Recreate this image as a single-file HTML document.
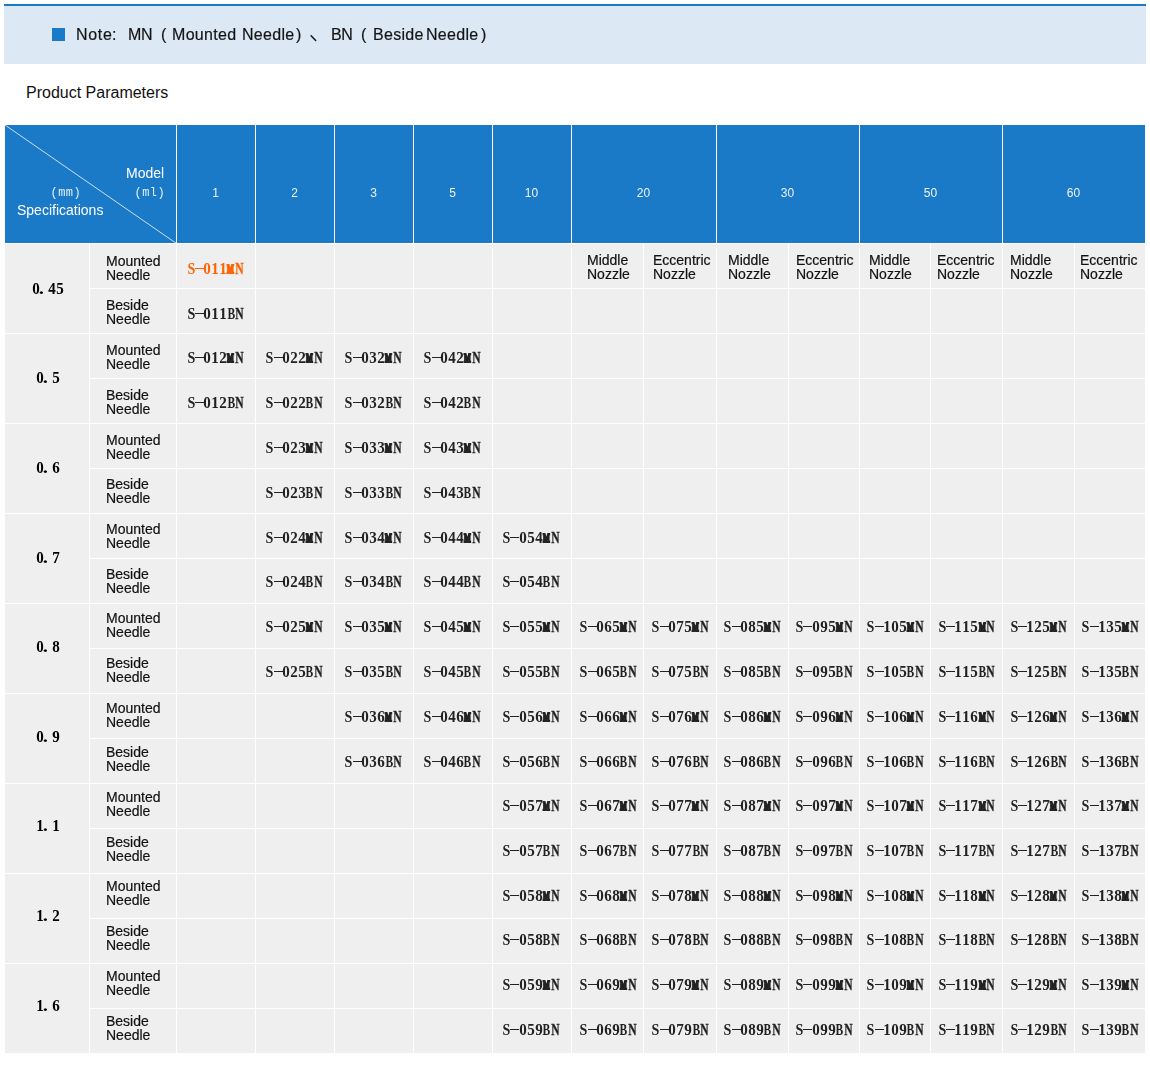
<!DOCTYPE html><html><head><meta charset="utf-8"><title>Product Parameters</title>
<style>
html,body{margin:0;padding:0;background:#fff;}
body{width:1150px;height:1090px;position:relative;overflow:hidden;font-family:"Liberation Sans",sans-serif;color:#1a1a1a;}
.a{position:absolute;}
.v{position:absolute;width:1px;background:#fff;}
.h{position:absolute;height:1px;background:#fff;}
.lab{position:absolute;font:14px/14px "Liberation Sans",sans-serif;color:#111;white-space:nowrap;-webkit-text-stroke:0.2px #111;}
.hn{position:absolute;font:12px/12px "Liberation Sans",sans-serif;color:rgba(255,255,255,.92);text-align:center;width:40px;}
.ht{position:absolute;font:14px/14px "Liberation Sans",sans-serif;color:#fff;white-space:nowrap;}
.c{position:absolute;width:56px;height:16px;white-space:nowrap;font:bold 16px/16px "Liberation Serif",serif;color:#222;}
.c i{font-style:normal;display:inline-block;width:8px;text-align:center;vertical-align:top;}
.c i b{display:inline-block;font-weight:bold;transform-origin:50% 50%;}
.o{color:#ff6200;}
.sp{position:absolute;width:84px;text-align:center;font:bold 16px/16px "Liberation Serif",serif;color:#000;white-space:nowrap;}

.nt{font:16px/20px "Liberation Sans",sans-serif;color:#151515;white-space:nowrap;letter-spacing:0.3px;-webkit-text-stroke:0.2px #151515;}
.hm{font:12px/14px "Liberation Mono",monospace;letter-spacing:0.45px;color:rgba(255,255,255,.88);}
.c i b.s{transform:scaleX(.88);}
.c i b.g{transform:scaleX(.94);}
.c i b{margin:0 -5px;}
.c i b.b{transform:translateX(0px) scaleX(.72);}
.c i b.n{transform:translateX(0.6px) scaleX(.72);-webkit-text-stroke:0.35px currentColor;}
.c i b.m{transform:translateX(-0.1px) scale(.45,.79);-webkit-text-stroke:2.6px currentColor;}
.c i u{display:block;width:9px;height:1px;background:currentColor;margin:7px 0 0 -0.2px;text-decoration:none;}
.c i b.p{transform:translateX(-2.6px) scaleX(1.3);}
</style></head><body>
<div class="a" style="left:4px;top:4px;width:1142px;height:60px;background:#dce9f5;"></div>
<div class="a" style="left:4px;top:4px;width:1142px;height:2px;background:#1b7ac8;"></div>
<div class="a" style="left:52px;top:28px;width:13px;height:13px;background:#1b7ac8;"></div>
<!--NOTE_TEXT-->
<div class="a" id="pp" style="left:26px;top:84px;font:16px/18px 'Liberation Sans',sans-serif;color:#111;white-space:nowrap;">Product Parameters</div>
<div class="a" style="left:5px;top:125px;width:1140px;height:118px;background:#1b7ac8;"></div>
<div class="a" style="left:5px;top:243px;width:1140px;height:810px;background:#efefef;"></div>
<svg class="a" style="left:5px;top:125px;" width="172" height="119" viewBox="0 0 172 119"><line x1="0" y1="0" x2="171.5" y2="118.5" stroke="#fff" stroke-width="0.9" stroke-opacity="0.85"/></svg>
<div class="v" style="left:176px;top:125px;height:928px;"></div>
<div class="v" style="left:255px;top:125px;height:928px;"></div>
<div class="v" style="left:334px;top:125px;height:928px;"></div>
<div class="v" style="left:413px;top:125px;height:928px;"></div>
<div class="v" style="left:492px;top:125px;height:928px;"></div>
<div class="v" style="left:571px;top:125px;height:928px;"></div>
<div class="v" style="left:643px;top:243px;height:810px;"></div>
<div class="v" style="left:716px;top:125px;height:928px;"></div>
<div class="v" style="left:788px;top:243px;height:810px;"></div>
<div class="v" style="left:859px;top:125px;height:928px;"></div>
<div class="v" style="left:930px;top:243px;height:810px;"></div>
<div class="v" style="left:1002px;top:125px;height:928px;"></div>
<div class="v" style="left:1074px;top:243px;height:810px;"></div>
<div class="v" style="left:89px;top:243px;height:810px;"></div>
<div class="h" style="left:5px;top:243px;width:1140px;"></div>
<div class="h" style="left:90px;top:288px;width:1055px;"></div>
<div class="h" style="left:5px;top:333px;width:1140px;"></div>
<div class="h" style="left:90px;top:378px;width:1055px;"></div>
<div class="h" style="left:5px;top:423px;width:1140px;"></div>
<div class="h" style="left:90px;top:468px;width:1055px;"></div>
<div class="h" style="left:5px;top:513px;width:1140px;"></div>
<div class="h" style="left:90px;top:558px;width:1055px;"></div>
<div class="h" style="left:5px;top:603px;width:1140px;"></div>
<div class="h" style="left:90px;top:648px;width:1055px;"></div>
<div class="h" style="left:5px;top:693px;width:1140px;"></div>
<div class="h" style="left:90px;top:738px;width:1055px;"></div>
<div class="h" style="left:5px;top:783px;width:1140px;"></div>
<div class="h" style="left:90px;top:828px;width:1055px;"></div>
<div class="h" style="left:5px;top:873px;width:1140px;"></div>
<div class="h" style="left:90px;top:918px;width:1055px;"></div>
<div class="h" style="left:5px;top:963px;width:1140px;"></div>
<div class="h" style="left:90px;top:1008px;width:1055px;"></div>
<div id="L" style="position:absolute;left:0;top:0;width:1150px;height:1090px;will-change:transform;">
<div class="a nt" style="left:76px;top:25px;letter-spacing:0.7px;">Note</div>
<div class="a nt" style="left:112px;top:25px;">:</div>
<div class="a nt" style="left:128px;top:25px;letter-spacing:-0.3px;">MN</div>
<div class="a nt" style="left:161px;top:25px;">(</div>
<div class="a nt" style="left:172px;top:25px;">Mounted</div>
<div class="a nt" style="left:242px;top:25px;">Needle</div>
<div class="a nt" style="left:296px;top:25px;">)</div>
<div class="a nt" style="left:331px;top:25px;letter-spacing:-0.3px;">BN</div>
<div class="a nt" style="left:361px;top:25px;">(</div>
<div class="a nt" style="left:373px;top:25px;">Beside</div>
<div class="a nt" style="left:426px;top:25px;">Needle</div>
<div class="a nt" style="left:481px;top:25px;">)</div>
<svg class="a" style="left:308px;top:32px;" width="12" height="12" viewBox="0 0 12 12"><line x1="3.1" y1="3.7" x2="7.7" y2="8.5" stroke="#151515" stroke-width="1.5" stroke-linecap="round"/></svg>
<div class="ht" id="hmodel" style="left:126px;top:166px;">Model</div>
<div class="ht hm" id="hml" style="left:134.5px;top:185.7px;">(ml)</div>
<div class="ht hm" id="hmm" style="left:50.5px;top:185.7px;">(mm)</div>
<div class="ht" id="hspec" style="left:17px;top:203px;">Specifications</div>
<div class="hn" style="left:195.5px;top:187px;">1</div>
<div class="hn" style="left:274.5px;top:187px;">2</div>
<div class="hn" style="left:353.5px;top:187px;">3</div>
<div class="hn" style="left:432.5px;top:187px;">5</div>
<div class="hn" style="left:511.5px;top:187px;">10</div>
<div class="hn" style="left:623.5px;top:187px;">20</div>
<div class="hn" style="left:767.5px;top:187px;">30</div>
<div class="hn" style="left:910.5px;top:187px;">50</div>
<div class="hn" style="left:1053.5px;top:187px;">60</div>
<div class="lab" style="left:587px;top:253px;">Middle<br>Nozzle</div>
<div class="lab" style="left:653px;top:253px;">Eccentric<br>Nozzle</div>
<div class="lab" style="left:728px;top:253px;">Middle<br>Nozzle</div>
<div class="lab" style="left:796px;top:253px;">Eccentric<br>Nozzle</div>
<div class="lab" style="left:869px;top:253px;">Middle<br>Nozzle</div>
<div class="lab" style="left:937px;top:253px;">Eccentric<br>Nozzle</div>
<div class="lab" style="left:1010px;top:253px;">Middle<br>Nozzle</div>
<div class="lab" style="left:1080px;top:253px;">Eccentric<br>Nozzle</div>
<div class="lab" style="left:106px;top:254.15px;">Mounted<br>Needle</div>
<div class="lab" style="left:106px;top:298.15px;">Beside<br>Needle</div>
<div class="lab" style="left:106px;top:343.47px;">Mounted<br>Needle</div>
<div class="lab" style="left:106px;top:387.60px;">Beside<br>Needle</div>
<div class="lab" style="left:106px;top:432.80px;">Mounted<br>Needle</div>
<div class="lab" style="left:106px;top:477.05px;">Beside<br>Needle</div>
<div class="lab" style="left:106px;top:522.12px;">Mounted<br>Needle</div>
<div class="lab" style="left:106px;top:566.50px;">Beside<br>Needle</div>
<div class="lab" style="left:106px;top:611.45px;">Mounted<br>Needle</div>
<div class="lab" style="left:106px;top:655.95px;">Beside<br>Needle</div>
<div class="lab" style="left:106px;top:700.77px;">Mounted<br>Needle</div>
<div class="lab" style="left:106px;top:745.40px;">Beside<br>Needle</div>
<div class="lab" style="left:106px;top:790.10px;">Mounted<br>Needle</div>
<div class="lab" style="left:106px;top:834.85px;">Beside<br>Needle</div>
<div class="lab" style="left:106px;top:879.42px;">Mounted<br>Needle</div>
<div class="lab" style="left:106px;top:924.30px;">Beside<br>Needle</div>
<div class="lab" style="left:106px;top:968.75px;">Mounted<br>Needle</div>
<div class="lab" style="left:106px;top:1013.75px;">Beside<br>Needle</div>
<div class="c sp" style="left:32.1px;top:280.70px;width:32px;"><i><b class="g">0</b></i><i><b class="p">.</b></i><i><b class="g">4</b></i><i><b class="g">5</b></i></div>
<div class="c sp" style="left:36.1px;top:370.32px;width:24px;"><i><b class="g">0</b></i><i><b class="p">.</b></i><i><b class="g">5</b></i></div>
<div class="c sp" style="left:36.1px;top:459.94px;width:24px;"><i><b class="g">0</b></i><i><b class="p">.</b></i><i><b class="g">6</b></i></div>
<div class="c sp" style="left:36.1px;top:549.56px;width:24px;"><i><b class="g">0</b></i><i><b class="p">.</b></i><i><b class="g">7</b></i></div>
<div class="c sp" style="left:36.1px;top:639.18px;width:24px;"><i><b class="g">0</b></i><i><b class="p">.</b></i><i><b class="g">8</b></i></div>
<div class="c sp" style="left:36.1px;top:728.80px;width:24px;"><i><b class="g">0</b></i><i><b class="p">.</b></i><i><b class="g">9</b></i></div>
<div class="c sp" style="left:36.1px;top:818.42px;width:24px;"><i><b class="g">1</b></i><i><b class="p">.</b></i><i><b class="g">1</b></i></div>
<div class="c sp" style="left:36.1px;top:908.04px;width:24px;"><i><b class="g">1</b></i><i><b class="p">.</b></i><i><b class="g">2</b></i></div>
<div class="c sp" style="left:36.1px;top:997.66px;width:24px;"><i><b class="g">1</b></i><i><b class="p">.</b></i><i><b class="g">6</b></i></div>
<div class="c o" style="left:187.0px;top:261.00px;"><i><b class="s">S</b></i><i><u></u></i><i><b class="g">0</b></i><i><b class="g">1</b></i><i><b class="g">1</b></i><i><b class="m">M</b></i><i><b class="n">N</b></i></div>
<div class="c" style="left:187.0px;top:306.00px;"><i><b class="s">S</b></i><i><u></u></i><i><b class="g">0</b></i><i><b class="g">1</b></i><i><b class="g">1</b></i><i><b class="b">B</b></i><i><b class="n">N</b></i></div>
<div class="c" style="left:187.0px;top:350.00px;"><i><b class="s">S</b></i><i><u></u></i><i><b class="g">0</b></i><i><b class="g">1</b></i><i><b class="g">2</b></i><i><b class="m">M</b></i><i><b class="n">N</b></i></div>
<div class="c" style="left:265.7px;top:350.00px;"><i><b class="s">S</b></i><i><u></u></i><i><b class="g">0</b></i><i><b class="g">2</b></i><i><b class="g">2</b></i><i><b class="m">M</b></i><i><b class="n">N</b></i></div>
<div class="c" style="left:344.9px;top:350.00px;"><i><b class="s">S</b></i><i><u></u></i><i><b class="g">0</b></i><i><b class="g">3</b></i><i><b class="g">2</b></i><i><b class="m">M</b></i><i><b class="n">N</b></i></div>
<div class="c" style="left:423.8px;top:350.00px;"><i><b class="s">S</b></i><i><u></u></i><i><b class="g">0</b></i><i><b class="g">4</b></i><i><b class="g">2</b></i><i><b class="m">M</b></i><i><b class="n">N</b></i></div>
<div class="c" style="left:187.0px;top:395.00px;"><i><b class="s">S</b></i><i><u></u></i><i><b class="g">0</b></i><i><b class="g">1</b></i><i><b class="g">2</b></i><i><b class="b">B</b></i><i><b class="n">N</b></i></div>
<div class="c" style="left:265.7px;top:395.00px;"><i><b class="s">S</b></i><i><u></u></i><i><b class="g">0</b></i><i><b class="g">2</b></i><i><b class="g">2</b></i><i><b class="b">B</b></i><i><b class="n">N</b></i></div>
<div class="c" style="left:344.9px;top:395.00px;"><i><b class="s">S</b></i><i><u></u></i><i><b class="g">0</b></i><i><b class="g">3</b></i><i><b class="g">2</b></i><i><b class="b">B</b></i><i><b class="n">N</b></i></div>
<div class="c" style="left:423.8px;top:395.00px;"><i><b class="s">S</b></i><i><u></u></i><i><b class="g">0</b></i><i><b class="g">4</b></i><i><b class="g">2</b></i><i><b class="b">B</b></i><i><b class="n">N</b></i></div>
<div class="c" style="left:265.7px;top:440.00px;"><i><b class="s">S</b></i><i><u></u></i><i><b class="g">0</b></i><i><b class="g">2</b></i><i><b class="g">3</b></i><i><b class="m">M</b></i><i><b class="n">N</b></i></div>
<div class="c" style="left:344.9px;top:440.00px;"><i><b class="s">S</b></i><i><u></u></i><i><b class="g">0</b></i><i><b class="g">3</b></i><i><b class="g">3</b></i><i><b class="m">M</b></i><i><b class="n">N</b></i></div>
<div class="c" style="left:423.8px;top:440.00px;"><i><b class="s">S</b></i><i><u></u></i><i><b class="g">0</b></i><i><b class="g">4</b></i><i><b class="g">3</b></i><i><b class="m">M</b></i><i><b class="n">N</b></i></div>
<div class="c" style="left:265.7px;top:485.00px;"><i><b class="s">S</b></i><i><u></u></i><i><b class="g">0</b></i><i><b class="g">2</b></i><i><b class="g">3</b></i><i><b class="b">B</b></i><i><b class="n">N</b></i></div>
<div class="c" style="left:344.9px;top:485.00px;"><i><b class="s">S</b></i><i><u></u></i><i><b class="g">0</b></i><i><b class="g">3</b></i><i><b class="g">3</b></i><i><b class="b">B</b></i><i><b class="n">N</b></i></div>
<div class="c" style="left:423.8px;top:485.00px;"><i><b class="s">S</b></i><i><u></u></i><i><b class="g">0</b></i><i><b class="g">4</b></i><i><b class="g">3</b></i><i><b class="b">B</b></i><i><b class="n">N</b></i></div>
<div class="c" style="left:265.7px;top:530.00px;"><i><b class="s">S</b></i><i><u></u></i><i><b class="g">0</b></i><i><b class="g">2</b></i><i><b class="g">4</b></i><i><b class="m">M</b></i><i><b class="n">N</b></i></div>
<div class="c" style="left:344.9px;top:530.00px;"><i><b class="s">S</b></i><i><u></u></i><i><b class="g">0</b></i><i><b class="g">3</b></i><i><b class="g">4</b></i><i><b class="m">M</b></i><i><b class="n">N</b></i></div>
<div class="c" style="left:423.8px;top:530.00px;"><i><b class="s">S</b></i><i><u></u></i><i><b class="g">0</b></i><i><b class="g">4</b></i><i><b class="g">4</b></i><i><b class="m">M</b></i><i><b class="n">N</b></i></div>
<div class="c" style="left:502.6px;top:530.00px;"><i><b class="s">S</b></i><i><u></u></i><i><b class="g">0</b></i><i><b class="g">5</b></i><i><b class="g">4</b></i><i><b class="m">M</b></i><i><b class="n">N</b></i></div>
<div class="c" style="left:265.7px;top:574.00px;"><i><b class="s">S</b></i><i><u></u></i><i><b class="g">0</b></i><i><b class="g">2</b></i><i><b class="g">4</b></i><i><b class="b">B</b></i><i><b class="n">N</b></i></div>
<div class="c" style="left:344.9px;top:574.00px;"><i><b class="s">S</b></i><i><u></u></i><i><b class="g">0</b></i><i><b class="g">3</b></i><i><b class="g">4</b></i><i><b class="b">B</b></i><i><b class="n">N</b></i></div>
<div class="c" style="left:423.8px;top:574.00px;"><i><b class="s">S</b></i><i><u></u></i><i><b class="g">0</b></i><i><b class="g">4</b></i><i><b class="g">4</b></i><i><b class="b">B</b></i><i><b class="n">N</b></i></div>
<div class="c" style="left:502.6px;top:574.00px;"><i><b class="s">S</b></i><i><u></u></i><i><b class="g">0</b></i><i><b class="g">5</b></i><i><b class="g">4</b></i><i><b class="b">B</b></i><i><b class="n">N</b></i></div>
<div class="c" style="left:265.7px;top:619.00px;"><i><b class="s">S</b></i><i><u></u></i><i><b class="g">0</b></i><i><b class="g">2</b></i><i><b class="g">5</b></i><i><b class="m">M</b></i><i><b class="n">N</b></i></div>
<div class="c" style="left:344.9px;top:619.00px;"><i><b class="s">S</b></i><i><u></u></i><i><b class="g">0</b></i><i><b class="g">3</b></i><i><b class="g">5</b></i><i><b class="m">M</b></i><i><b class="n">N</b></i></div>
<div class="c" style="left:423.8px;top:619.00px;"><i><b class="s">S</b></i><i><u></u></i><i><b class="g">0</b></i><i><b class="g">4</b></i><i><b class="g">5</b></i><i><b class="m">M</b></i><i><b class="n">N</b></i></div>
<div class="c" style="left:502.6px;top:619.00px;"><i><b class="s">S</b></i><i><u></u></i><i><b class="g">0</b></i><i><b class="g">5</b></i><i><b class="g">5</b></i><i><b class="m">M</b></i><i><b class="n">N</b></i></div>
<div class="c" style="left:579.7px;top:619.00px;"><i><b class="s">S</b></i><i><u></u></i><i><b class="g">0</b></i><i><b class="g">6</b></i><i><b class="g">5</b></i><i><b class="m">M</b></i><i><b class="n">N</b></i></div>
<div class="c" style="left:651.9px;top:619.00px;"><i><b class="s">S</b></i><i><u></u></i><i><b class="g">0</b></i><i><b class="g">7</b></i><i><b class="g">5</b></i><i><b class="m">M</b></i><i><b class="n">N</b></i></div>
<div class="c" style="left:723.7px;top:619.00px;"><i><b class="s">S</b></i><i><u></u></i><i><b class="g">0</b></i><i><b class="g">8</b></i><i><b class="g">5</b></i><i><b class="m">M</b></i><i><b class="n">N</b></i></div>
<div class="c" style="left:795.6px;top:619.00px;"><i><b class="s">S</b></i><i><u></u></i><i><b class="g">0</b></i><i><b class="g">9</b></i><i><b class="g">5</b></i><i><b class="m">M</b></i><i><b class="n">N</b></i></div>
<div class="c" style="left:866.7px;top:619.00px;"><i><b class="s">S</b></i><i><u></u></i><i><b class="g">1</b></i><i><b class="g">0</b></i><i><b class="g">5</b></i><i><b class="m">M</b></i><i><b class="n">N</b></i></div>
<div class="c" style="left:938.1px;top:619.00px;"><i><b class="s">S</b></i><i><u></u></i><i><b class="g">1</b></i><i><b class="g">1</b></i><i><b class="g">5</b></i><i><b class="m">M</b></i><i><b class="n">N</b></i></div>
<div class="c" style="left:1010.0px;top:619.00px;"><i><b class="s">S</b></i><i><u></u></i><i><b class="g">1</b></i><i><b class="g">2</b></i><i><b class="g">5</b></i><i><b class="m">M</b></i><i><b class="n">N</b></i></div>
<div class="c" style="left:1081.7px;top:619.00px;"><i><b class="s">S</b></i><i><u></u></i><i><b class="g">1</b></i><i><b class="g">3</b></i><i><b class="g">5</b></i><i><b class="m">M</b></i><i><b class="n">N</b></i></div>
<div class="c" style="left:265.7px;top:664.00px;"><i><b class="s">S</b></i><i><u></u></i><i><b class="g">0</b></i><i><b class="g">2</b></i><i><b class="g">5</b></i><i><b class="b">B</b></i><i><b class="n">N</b></i></div>
<div class="c" style="left:344.9px;top:664.00px;"><i><b class="s">S</b></i><i><u></u></i><i><b class="g">0</b></i><i><b class="g">3</b></i><i><b class="g">5</b></i><i><b class="b">B</b></i><i><b class="n">N</b></i></div>
<div class="c" style="left:423.8px;top:664.00px;"><i><b class="s">S</b></i><i><u></u></i><i><b class="g">0</b></i><i><b class="g">4</b></i><i><b class="g">5</b></i><i><b class="b">B</b></i><i><b class="n">N</b></i></div>
<div class="c" style="left:502.6px;top:664.00px;"><i><b class="s">S</b></i><i><u></u></i><i><b class="g">0</b></i><i><b class="g">5</b></i><i><b class="g">5</b></i><i><b class="b">B</b></i><i><b class="n">N</b></i></div>
<div class="c" style="left:579.7px;top:664.00px;"><i><b class="s">S</b></i><i><u></u></i><i><b class="g">0</b></i><i><b class="g">6</b></i><i><b class="g">5</b></i><i><b class="b">B</b></i><i><b class="n">N</b></i></div>
<div class="c" style="left:651.9px;top:664.00px;"><i><b class="s">S</b></i><i><u></u></i><i><b class="g">0</b></i><i><b class="g">7</b></i><i><b class="g">5</b></i><i><b class="b">B</b></i><i><b class="n">N</b></i></div>
<div class="c" style="left:723.7px;top:664.00px;"><i><b class="s">S</b></i><i><u></u></i><i><b class="g">0</b></i><i><b class="g">8</b></i><i><b class="g">5</b></i><i><b class="b">B</b></i><i><b class="n">N</b></i></div>
<div class="c" style="left:795.6px;top:664.00px;"><i><b class="s">S</b></i><i><u></u></i><i><b class="g">0</b></i><i><b class="g">9</b></i><i><b class="g">5</b></i><i><b class="b">B</b></i><i><b class="n">N</b></i></div>
<div class="c" style="left:866.7px;top:664.00px;"><i><b class="s">S</b></i><i><u></u></i><i><b class="g">1</b></i><i><b class="g">0</b></i><i><b class="g">5</b></i><i><b class="b">B</b></i><i><b class="n">N</b></i></div>
<div class="c" style="left:938.1px;top:664.00px;"><i><b class="s">S</b></i><i><u></u></i><i><b class="g">1</b></i><i><b class="g">1</b></i><i><b class="g">5</b></i><i><b class="b">B</b></i><i><b class="n">N</b></i></div>
<div class="c" style="left:1010.0px;top:664.00px;"><i><b class="s">S</b></i><i><u></u></i><i><b class="g">1</b></i><i><b class="g">2</b></i><i><b class="g">5</b></i><i><b class="b">B</b></i><i><b class="n">N</b></i></div>
<div class="c" style="left:1081.7px;top:664.00px;"><i><b class="s">S</b></i><i><u></u></i><i><b class="g">1</b></i><i><b class="g">3</b></i><i><b class="g">5</b></i><i><b class="b">B</b></i><i><b class="n">N</b></i></div>
<div class="c" style="left:344.9px;top:709.00px;"><i><b class="s">S</b></i><i><u></u></i><i><b class="g">0</b></i><i><b class="g">3</b></i><i><b class="g">6</b></i><i><b class="m">M</b></i><i><b class="n">N</b></i></div>
<div class="c" style="left:423.8px;top:709.00px;"><i><b class="s">S</b></i><i><u></u></i><i><b class="g">0</b></i><i><b class="g">4</b></i><i><b class="g">6</b></i><i><b class="m">M</b></i><i><b class="n">N</b></i></div>
<div class="c" style="left:502.6px;top:709.00px;"><i><b class="s">S</b></i><i><u></u></i><i><b class="g">0</b></i><i><b class="g">5</b></i><i><b class="g">6</b></i><i><b class="m">M</b></i><i><b class="n">N</b></i></div>
<div class="c" style="left:579.7px;top:709.00px;"><i><b class="s">S</b></i><i><u></u></i><i><b class="g">0</b></i><i><b class="g">6</b></i><i><b class="g">6</b></i><i><b class="m">M</b></i><i><b class="n">N</b></i></div>
<div class="c" style="left:651.9px;top:709.00px;"><i><b class="s">S</b></i><i><u></u></i><i><b class="g">0</b></i><i><b class="g">7</b></i><i><b class="g">6</b></i><i><b class="m">M</b></i><i><b class="n">N</b></i></div>
<div class="c" style="left:723.7px;top:709.00px;"><i><b class="s">S</b></i><i><u></u></i><i><b class="g">0</b></i><i><b class="g">8</b></i><i><b class="g">6</b></i><i><b class="m">M</b></i><i><b class="n">N</b></i></div>
<div class="c" style="left:795.6px;top:709.00px;"><i><b class="s">S</b></i><i><u></u></i><i><b class="g">0</b></i><i><b class="g">9</b></i><i><b class="g">6</b></i><i><b class="m">M</b></i><i><b class="n">N</b></i></div>
<div class="c" style="left:866.7px;top:709.00px;"><i><b class="s">S</b></i><i><u></u></i><i><b class="g">1</b></i><i><b class="g">0</b></i><i><b class="g">6</b></i><i><b class="m">M</b></i><i><b class="n">N</b></i></div>
<div class="c" style="left:938.1px;top:709.00px;"><i><b class="s">S</b></i><i><u></u></i><i><b class="g">1</b></i><i><b class="g">1</b></i><i><b class="g">6</b></i><i><b class="m">M</b></i><i><b class="n">N</b></i></div>
<div class="c" style="left:1010.0px;top:709.00px;"><i><b class="s">S</b></i><i><u></u></i><i><b class="g">1</b></i><i><b class="g">2</b></i><i><b class="g">6</b></i><i><b class="m">M</b></i><i><b class="n">N</b></i></div>
<div class="c" style="left:1081.7px;top:709.00px;"><i><b class="s">S</b></i><i><u></u></i><i><b class="g">1</b></i><i><b class="g">3</b></i><i><b class="g">6</b></i><i><b class="m">M</b></i><i><b class="n">N</b></i></div>
<div class="c" style="left:344.9px;top:754.00px;"><i><b class="s">S</b></i><i><u></u></i><i><b class="g">0</b></i><i><b class="g">3</b></i><i><b class="g">6</b></i><i><b class="b">B</b></i><i><b class="n">N</b></i></div>
<div class="c" style="left:423.8px;top:754.00px;"><i><b class="s">S</b></i><i><u></u></i><i><b class="g">0</b></i><i><b class="g">4</b></i><i><b class="g">6</b></i><i><b class="b">B</b></i><i><b class="n">N</b></i></div>
<div class="c" style="left:502.6px;top:754.00px;"><i><b class="s">S</b></i><i><u></u></i><i><b class="g">0</b></i><i><b class="g">5</b></i><i><b class="g">6</b></i><i><b class="b">B</b></i><i><b class="n">N</b></i></div>
<div class="c" style="left:579.7px;top:754.00px;"><i><b class="s">S</b></i><i><u></u></i><i><b class="g">0</b></i><i><b class="g">6</b></i><i><b class="g">6</b></i><i><b class="b">B</b></i><i><b class="n">N</b></i></div>
<div class="c" style="left:651.9px;top:754.00px;"><i><b class="s">S</b></i><i><u></u></i><i><b class="g">0</b></i><i><b class="g">7</b></i><i><b class="g">6</b></i><i><b class="b">B</b></i><i><b class="n">N</b></i></div>
<div class="c" style="left:723.7px;top:754.00px;"><i><b class="s">S</b></i><i><u></u></i><i><b class="g">0</b></i><i><b class="g">8</b></i><i><b class="g">6</b></i><i><b class="b">B</b></i><i><b class="n">N</b></i></div>
<div class="c" style="left:795.6px;top:754.00px;"><i><b class="s">S</b></i><i><u></u></i><i><b class="g">0</b></i><i><b class="g">9</b></i><i><b class="g">6</b></i><i><b class="b">B</b></i><i><b class="n">N</b></i></div>
<div class="c" style="left:866.7px;top:754.00px;"><i><b class="s">S</b></i><i><u></u></i><i><b class="g">1</b></i><i><b class="g">0</b></i><i><b class="g">6</b></i><i><b class="b">B</b></i><i><b class="n">N</b></i></div>
<div class="c" style="left:938.1px;top:754.00px;"><i><b class="s">S</b></i><i><u></u></i><i><b class="g">1</b></i><i><b class="g">1</b></i><i><b class="g">6</b></i><i><b class="b">B</b></i><i><b class="n">N</b></i></div>
<div class="c" style="left:1010.0px;top:754.00px;"><i><b class="s">S</b></i><i><u></u></i><i><b class="g">1</b></i><i><b class="g">2</b></i><i><b class="g">6</b></i><i><b class="b">B</b></i><i><b class="n">N</b></i></div>
<div class="c" style="left:1081.7px;top:754.00px;"><i><b class="s">S</b></i><i><u></u></i><i><b class="g">1</b></i><i><b class="g">3</b></i><i><b class="g">6</b></i><i><b class="b">B</b></i><i><b class="n">N</b></i></div>
<div class="c" style="left:502.6px;top:798.00px;"><i><b class="s">S</b></i><i><u></u></i><i><b class="g">0</b></i><i><b class="g">5</b></i><i><b class="g">7</b></i><i><b class="m">M</b></i><i><b class="n">N</b></i></div>
<div class="c" style="left:579.7px;top:798.00px;"><i><b class="s">S</b></i><i><u></u></i><i><b class="g">0</b></i><i><b class="g">6</b></i><i><b class="g">7</b></i><i><b class="m">M</b></i><i><b class="n">N</b></i></div>
<div class="c" style="left:651.9px;top:798.00px;"><i><b class="s">S</b></i><i><u></u></i><i><b class="g">0</b></i><i><b class="g">7</b></i><i><b class="g">7</b></i><i><b class="m">M</b></i><i><b class="n">N</b></i></div>
<div class="c" style="left:723.7px;top:798.00px;"><i><b class="s">S</b></i><i><u></u></i><i><b class="g">0</b></i><i><b class="g">8</b></i><i><b class="g">7</b></i><i><b class="m">M</b></i><i><b class="n">N</b></i></div>
<div class="c" style="left:795.6px;top:798.00px;"><i><b class="s">S</b></i><i><u></u></i><i><b class="g">0</b></i><i><b class="g">9</b></i><i><b class="g">7</b></i><i><b class="m">M</b></i><i><b class="n">N</b></i></div>
<div class="c" style="left:866.7px;top:798.00px;"><i><b class="s">S</b></i><i><u></u></i><i><b class="g">1</b></i><i><b class="g">0</b></i><i><b class="g">7</b></i><i><b class="m">M</b></i><i><b class="n">N</b></i></div>
<div class="c" style="left:938.1px;top:798.00px;"><i><b class="s">S</b></i><i><u></u></i><i><b class="g">1</b></i><i><b class="g">1</b></i><i><b class="g">7</b></i><i><b class="m">M</b></i><i><b class="n">N</b></i></div>
<div class="c" style="left:1010.0px;top:798.00px;"><i><b class="s">S</b></i><i><u></u></i><i><b class="g">1</b></i><i><b class="g">2</b></i><i><b class="g">7</b></i><i><b class="m">M</b></i><i><b class="n">N</b></i></div>
<div class="c" style="left:1081.7px;top:798.00px;"><i><b class="s">S</b></i><i><u></u></i><i><b class="g">1</b></i><i><b class="g">3</b></i><i><b class="g">7</b></i><i><b class="m">M</b></i><i><b class="n">N</b></i></div>
<div class="c" style="left:502.6px;top:843.00px;"><i><b class="s">S</b></i><i><u></u></i><i><b class="g">0</b></i><i><b class="g">5</b></i><i><b class="g">7</b></i><i><b class="b">B</b></i><i><b class="n">N</b></i></div>
<div class="c" style="left:579.7px;top:843.00px;"><i><b class="s">S</b></i><i><u></u></i><i><b class="g">0</b></i><i><b class="g">6</b></i><i><b class="g">7</b></i><i><b class="b">B</b></i><i><b class="n">N</b></i></div>
<div class="c" style="left:651.9px;top:843.00px;"><i><b class="s">S</b></i><i><u></u></i><i><b class="g">0</b></i><i><b class="g">7</b></i><i><b class="g">7</b></i><i><b class="b">B</b></i><i><b class="n">N</b></i></div>
<div class="c" style="left:723.7px;top:843.00px;"><i><b class="s">S</b></i><i><u></u></i><i><b class="g">0</b></i><i><b class="g">8</b></i><i><b class="g">7</b></i><i><b class="b">B</b></i><i><b class="n">N</b></i></div>
<div class="c" style="left:795.6px;top:843.00px;"><i><b class="s">S</b></i><i><u></u></i><i><b class="g">0</b></i><i><b class="g">9</b></i><i><b class="g">7</b></i><i><b class="b">B</b></i><i><b class="n">N</b></i></div>
<div class="c" style="left:866.7px;top:843.00px;"><i><b class="s">S</b></i><i><u></u></i><i><b class="g">1</b></i><i><b class="g">0</b></i><i><b class="g">7</b></i><i><b class="b">B</b></i><i><b class="n">N</b></i></div>
<div class="c" style="left:938.1px;top:843.00px;"><i><b class="s">S</b></i><i><u></u></i><i><b class="g">1</b></i><i><b class="g">1</b></i><i><b class="g">7</b></i><i><b class="b">B</b></i><i><b class="n">N</b></i></div>
<div class="c" style="left:1010.0px;top:843.00px;"><i><b class="s">S</b></i><i><u></u></i><i><b class="g">1</b></i><i><b class="g">2</b></i><i><b class="g">7</b></i><i><b class="b">B</b></i><i><b class="n">N</b></i></div>
<div class="c" style="left:1081.7px;top:843.00px;"><i><b class="s">S</b></i><i><u></u></i><i><b class="g">1</b></i><i><b class="g">3</b></i><i><b class="g">7</b></i><i><b class="b">B</b></i><i><b class="n">N</b></i></div>
<div class="c" style="left:502.6px;top:888.00px;"><i><b class="s">S</b></i><i><u></u></i><i><b class="g">0</b></i><i><b class="g">5</b></i><i><b class="g">8</b></i><i><b class="m">M</b></i><i><b class="n">N</b></i></div>
<div class="c" style="left:579.7px;top:888.00px;"><i><b class="s">S</b></i><i><u></u></i><i><b class="g">0</b></i><i><b class="g">6</b></i><i><b class="g">8</b></i><i><b class="m">M</b></i><i><b class="n">N</b></i></div>
<div class="c" style="left:651.9px;top:888.00px;"><i><b class="s">S</b></i><i><u></u></i><i><b class="g">0</b></i><i><b class="g">7</b></i><i><b class="g">8</b></i><i><b class="m">M</b></i><i><b class="n">N</b></i></div>
<div class="c" style="left:723.7px;top:888.00px;"><i><b class="s">S</b></i><i><u></u></i><i><b class="g">0</b></i><i><b class="g">8</b></i><i><b class="g">8</b></i><i><b class="m">M</b></i><i><b class="n">N</b></i></div>
<div class="c" style="left:795.6px;top:888.00px;"><i><b class="s">S</b></i><i><u></u></i><i><b class="g">0</b></i><i><b class="g">9</b></i><i><b class="g">8</b></i><i><b class="m">M</b></i><i><b class="n">N</b></i></div>
<div class="c" style="left:866.7px;top:888.00px;"><i><b class="s">S</b></i><i><u></u></i><i><b class="g">1</b></i><i><b class="g">0</b></i><i><b class="g">8</b></i><i><b class="m">M</b></i><i><b class="n">N</b></i></div>
<div class="c" style="left:938.1px;top:888.00px;"><i><b class="s">S</b></i><i><u></u></i><i><b class="g">1</b></i><i><b class="g">1</b></i><i><b class="g">8</b></i><i><b class="m">M</b></i><i><b class="n">N</b></i></div>
<div class="c" style="left:1010.0px;top:888.00px;"><i><b class="s">S</b></i><i><u></u></i><i><b class="g">1</b></i><i><b class="g">2</b></i><i><b class="g">8</b></i><i><b class="m">M</b></i><i><b class="n">N</b></i></div>
<div class="c" style="left:1081.7px;top:888.00px;"><i><b class="s">S</b></i><i><u></u></i><i><b class="g">1</b></i><i><b class="g">3</b></i><i><b class="g">8</b></i><i><b class="m">M</b></i><i><b class="n">N</b></i></div>
<div class="c" style="left:502.6px;top:932.00px;"><i><b class="s">S</b></i><i><u></u></i><i><b class="g">0</b></i><i><b class="g">5</b></i><i><b class="g">8</b></i><i><b class="b">B</b></i><i><b class="n">N</b></i></div>
<div class="c" style="left:579.7px;top:932.00px;"><i><b class="s">S</b></i><i><u></u></i><i><b class="g">0</b></i><i><b class="g">6</b></i><i><b class="g">8</b></i><i><b class="b">B</b></i><i><b class="n">N</b></i></div>
<div class="c" style="left:651.9px;top:932.00px;"><i><b class="s">S</b></i><i><u></u></i><i><b class="g">0</b></i><i><b class="g">7</b></i><i><b class="g">8</b></i><i><b class="b">B</b></i><i><b class="n">N</b></i></div>
<div class="c" style="left:723.7px;top:932.00px;"><i><b class="s">S</b></i><i><u></u></i><i><b class="g">0</b></i><i><b class="g">8</b></i><i><b class="g">8</b></i><i><b class="b">B</b></i><i><b class="n">N</b></i></div>
<div class="c" style="left:795.6px;top:932.00px;"><i><b class="s">S</b></i><i><u></u></i><i><b class="g">0</b></i><i><b class="g">9</b></i><i><b class="g">8</b></i><i><b class="b">B</b></i><i><b class="n">N</b></i></div>
<div class="c" style="left:866.7px;top:932.00px;"><i><b class="s">S</b></i><i><u></u></i><i><b class="g">1</b></i><i><b class="g">0</b></i><i><b class="g">8</b></i><i><b class="b">B</b></i><i><b class="n">N</b></i></div>
<div class="c" style="left:938.1px;top:932.00px;"><i><b class="s">S</b></i><i><u></u></i><i><b class="g">1</b></i><i><b class="g">1</b></i><i><b class="g">8</b></i><i><b class="b">B</b></i><i><b class="n">N</b></i></div>
<div class="c" style="left:1010.0px;top:932.00px;"><i><b class="s">S</b></i><i><u></u></i><i><b class="g">1</b></i><i><b class="g">2</b></i><i><b class="g">8</b></i><i><b class="b">B</b></i><i><b class="n">N</b></i></div>
<div class="c" style="left:1081.7px;top:932.00px;"><i><b class="s">S</b></i><i><u></u></i><i><b class="g">1</b></i><i><b class="g">3</b></i><i><b class="g">8</b></i><i><b class="b">B</b></i><i><b class="n">N</b></i></div>
<div class="c" style="left:502.6px;top:977.00px;"><i><b class="s">S</b></i><i><u></u></i><i><b class="g">0</b></i><i><b class="g">5</b></i><i><b class="g">9</b></i><i><b class="m">M</b></i><i><b class="n">N</b></i></div>
<div class="c" style="left:579.7px;top:977.00px;"><i><b class="s">S</b></i><i><u></u></i><i><b class="g">0</b></i><i><b class="g">6</b></i><i><b class="g">9</b></i><i><b class="m">M</b></i><i><b class="n">N</b></i></div>
<div class="c" style="left:651.9px;top:977.00px;"><i><b class="s">S</b></i><i><u></u></i><i><b class="g">0</b></i><i><b class="g">7</b></i><i><b class="g">9</b></i><i><b class="m">M</b></i><i><b class="n">N</b></i></div>
<div class="c" style="left:723.7px;top:977.00px;"><i><b class="s">S</b></i><i><u></u></i><i><b class="g">0</b></i><i><b class="g">8</b></i><i><b class="g">9</b></i><i><b class="m">M</b></i><i><b class="n">N</b></i></div>
<div class="c" style="left:795.6px;top:977.00px;"><i><b class="s">S</b></i><i><u></u></i><i><b class="g">0</b></i><i><b class="g">9</b></i><i><b class="g">9</b></i><i><b class="m">M</b></i><i><b class="n">N</b></i></div>
<div class="c" style="left:866.7px;top:977.00px;"><i><b class="s">S</b></i><i><u></u></i><i><b class="g">1</b></i><i><b class="g">0</b></i><i><b class="g">9</b></i><i><b class="m">M</b></i><i><b class="n">N</b></i></div>
<div class="c" style="left:938.1px;top:977.00px;"><i><b class="s">S</b></i><i><u></u></i><i><b class="g">1</b></i><i><b class="g">1</b></i><i><b class="g">9</b></i><i><b class="m">M</b></i><i><b class="n">N</b></i></div>
<div class="c" style="left:1010.0px;top:977.00px;"><i><b class="s">S</b></i><i><u></u></i><i><b class="g">1</b></i><i><b class="g">2</b></i><i><b class="g">9</b></i><i><b class="m">M</b></i><i><b class="n">N</b></i></div>
<div class="c" style="left:1081.7px;top:977.00px;"><i><b class="s">S</b></i><i><u></u></i><i><b class="g">1</b></i><i><b class="g">3</b></i><i><b class="g">9</b></i><i><b class="m">M</b></i><i><b class="n">N</b></i></div>
<div class="c" style="left:502.6px;top:1022.00px;"><i><b class="s">S</b></i><i><u></u></i><i><b class="g">0</b></i><i><b class="g">5</b></i><i><b class="g">9</b></i><i><b class="b">B</b></i><i><b class="n">N</b></i></div>
<div class="c" style="left:579.7px;top:1022.00px;"><i><b class="s">S</b></i><i><u></u></i><i><b class="g">0</b></i><i><b class="g">6</b></i><i><b class="g">9</b></i><i><b class="b">B</b></i><i><b class="n">N</b></i></div>
<div class="c" style="left:651.9px;top:1022.00px;"><i><b class="s">S</b></i><i><u></u></i><i><b class="g">0</b></i><i><b class="g">7</b></i><i><b class="g">9</b></i><i><b class="b">B</b></i><i><b class="n">N</b></i></div>
<div class="c" style="left:723.7px;top:1022.00px;"><i><b class="s">S</b></i><i><u></u></i><i><b class="g">0</b></i><i><b class="g">8</b></i><i><b class="g">9</b></i><i><b class="b">B</b></i><i><b class="n">N</b></i></div>
<div class="c" style="left:795.6px;top:1022.00px;"><i><b class="s">S</b></i><i><u></u></i><i><b class="g">0</b></i><i><b class="g">9</b></i><i><b class="g">9</b></i><i><b class="b">B</b></i><i><b class="n">N</b></i></div>
<div class="c" style="left:866.7px;top:1022.00px;"><i><b class="s">S</b></i><i><u></u></i><i><b class="g">1</b></i><i><b class="g">0</b></i><i><b class="g">9</b></i><i><b class="b">B</b></i><i><b class="n">N</b></i></div>
<div class="c" style="left:938.1px;top:1022.00px;"><i><b class="s">S</b></i><i><u></u></i><i><b class="g">1</b></i><i><b class="g">1</b></i><i><b class="g">9</b></i><i><b class="b">B</b></i><i><b class="n">N</b></i></div>
<div class="c" style="left:1010.0px;top:1022.00px;"><i><b class="s">S</b></i><i><u></u></i><i><b class="g">1</b></i><i><b class="g">2</b></i><i><b class="g">9</b></i><i><b class="b">B</b></i><i><b class="n">N</b></i></div>
<div class="c" style="left:1081.7px;top:1022.00px;"><i><b class="s">S</b></i><i><u></u></i><i><b class="g">1</b></i><i><b class="g">3</b></i><i><b class="g">9</b></i><i><b class="b">B</b></i><i><b class="n">N</b></i></div>
</div>
</body></html>
